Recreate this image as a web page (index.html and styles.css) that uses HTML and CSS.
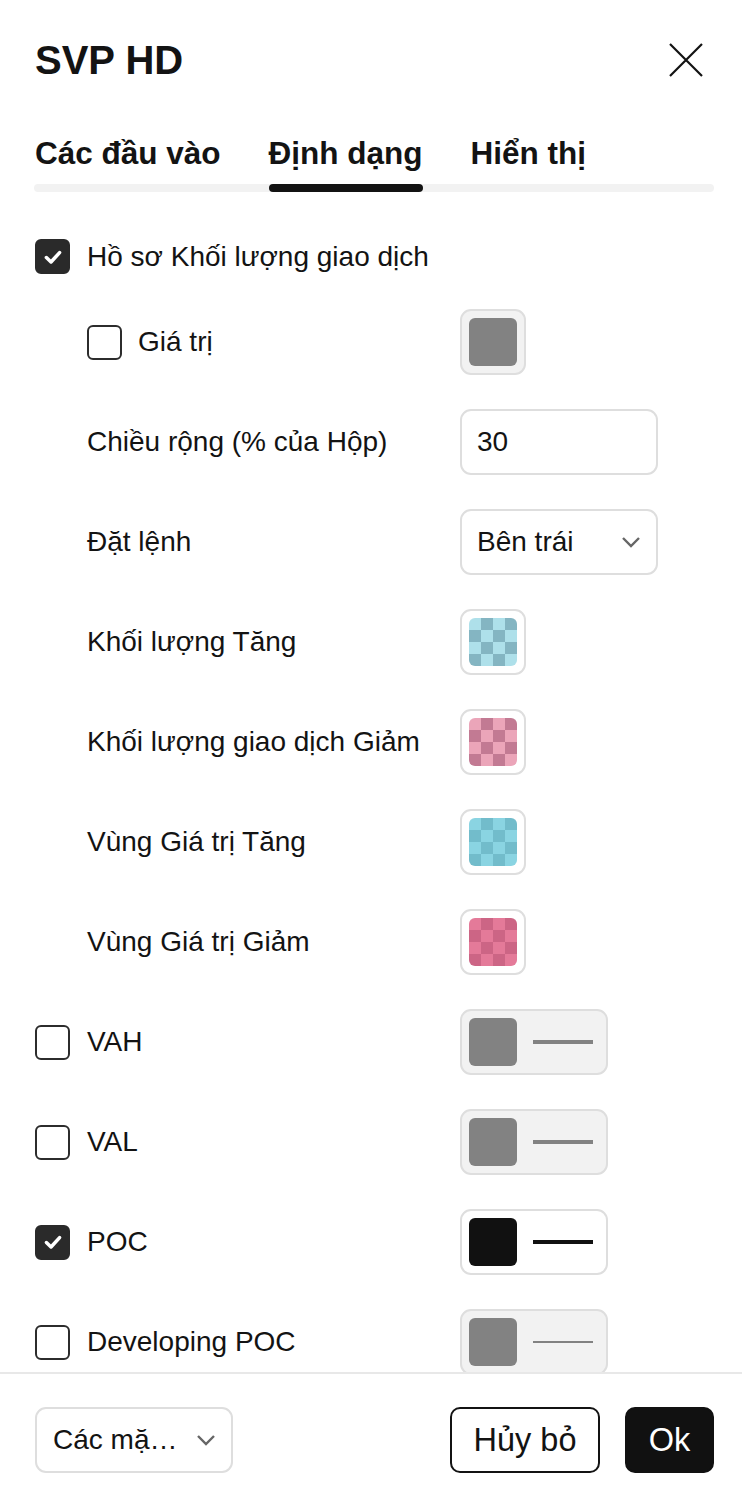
FILE: index.html
```html
<!DOCTYPE html>
<html lang="vi">
<head>
<meta charset="utf-8">
<title>SVP HD</title>
<link rel="stylesheet" href="styles.css">
</head>
<body>
<div class="dialog">
  <header class="header">
    <h1 class="title">SVP HD</h1>
    <button class="close" aria-label="Đóng">
      <svg width="34" height="34" viewBox="0 0 34 34"><path d="M1 1 L33 33 M33 1 L1 33" stroke="#131313" stroke-width="2.2" fill="none"/></svg>
    </button>
  </header>
  <nav class="tabs">
    <div class="tab-row">
      <span class="tab">Các đầu vào</span>
      <span class="tab active">Định dạng</span>
      <span class="tab">Hiển thị</span>
    </div>
    <div class="track"></div>
  </nav>
  <main class="content">
    <div class="row first">
      <label class="check-label"><span class="cb checked"><svg viewBox="0 0 20 20" width="22" height="22"><path d="M4 10.5 L8.2 14.5 L16 6" stroke="#fff" stroke-width="3.2" fill="none" stroke-linecap="round" stroke-linejoin="round"/></svg></span>Hồ sơ Khối lượng giao dịch</label>
    </div>
    <div class="row">
      <label class="check-label nested"><span class="cb"></span>Giá trị</label>
      <div class="swatch disabled"><span class="chip gray"></span></div>
    </div>
    <div class="row">
      <span class="label nested">Chiều rộng (% của Hộp)</span>
      <div class="field">30</div>
    </div>
    <div class="row">
      <span class="label nested">Đặt lệnh</span>
      <div class="field select">Bên trái<svg class="chev" width="20" height="12" viewBox="0 0 20 12"><path d="M2 2 L10 10 L18 2" stroke="#666" stroke-width="2.4" fill="none"/></svg></div>
    </div>
    <div class="row">
      <span class="label nested">Khối lượng Tăng</span>
      <div class="swatch"><span class="chip checker c1"></span></div>
    </div>
    <div class="row">
      <span class="label nested">Khối lượng giao dịch Giảm</span>
      <div class="swatch"><span class="chip checker c2"></span></div>
    </div>
    <div class="row">
      <span class="label nested">Vùng Giá trị Tăng</span>
      <div class="swatch"><span class="chip checker c3"></span></div>
    </div>
    <div class="row">
      <span class="label nested">Vùng Giá trị Giảm</span>
      <div class="swatch"><span class="chip checker c4"></span></div>
    </div>
    <div class="row">
      <label class="check-label"><span class="cb"></span>VAH</label>
      <div class="swatch wide disabled"><span class="chip gray"></span><span class="line gray-line"></span></div>
    </div>
    <div class="row">
      <label class="check-label"><span class="cb"></span>VAL</label>
      <div class="swatch wide disabled"><span class="chip gray"></span><span class="line gray-line"></span></div>
    </div>
    <div class="row">
      <label class="check-label"><span class="cb checked"><svg viewBox="0 0 20 20" width="22" height="22"><path d="M4 10.5 L8.2 14.5 L16 6" stroke="#fff" stroke-width="3.2" fill="none" stroke-linecap="round" stroke-linejoin="round"/></svg></span>POC</label>
      <div class="swatch wide"><span class="chip black"></span><span class="line black-line"></span></div>
    </div>
    <div class="row">
      <label class="check-label"><span class="cb"></span>Developing POC</label>
      <div class="swatch wide disabled"><span class="chip gray"></span><span class="line gray-line thin"></span></div>
    </div>
  </main>
  <footer class="footer">
    <div class="field select small">Các mặ…<svg class="chev" width="20" height="12" viewBox="0 0 20 12"><path d="M2 2 L10 10 L18 2" stroke="#666" stroke-width="2.4" fill="none"/></svg></div>
    <div class="actions">
      <button class="btn cancel">Hủy bỏ</button>
      <button class="btn ok">Ok</button>
    </div>
  </footer>
</div>
</body>
</html>
```

FILE: styles.css
```css
* { box-sizing: border-box; }
html, body { margin: 0; padding: 0; background: #fff; }
body {
  font-family: "Liberation Sans", Arial, sans-serif;
  color: #131313;
}
.dialog {
  width: 742px;
  height: 1496px;
  display: flex;
  flex-direction: column;
  overflow: hidden;
}
.header {
  height: 120px;
  flex: none;
  display: flex;
  align-items: center;
  justify-content: space-between;
  padding: 0 39px 0 35px;
}
.title {
  margin: 0;
  font-size: 40px;
  font-weight: 700;
  line-height: 48px;
}
.close {
  border: 0;
  background: none;
  padding: 0;
  width: 34px;
  height: 34px;
  display: flex;
}
.tabs {
  flex: none;
  padding: 0 28px 0 34px;
}
.tab-row {
  display: flex;
  gap: 48px;
  height: 64px;
  padding: 13px 0 11px 1px;
}
.tab {
  position: relative;
  font-size: 31.5px;
  font-weight: 700;
  line-height: 40px;
  white-space: nowrap;
}
.tab.active::after {
  content: "";
  position: absolute;
  left: 0;
  right: 0;
  bottom: -19px;
  height: 8px;
  border-radius: 4px;
  background: #131313;
}
.track {
  height: 8px;
  border-radius: 4px;
  background: #f2f2f2;
}
.content {
  flex: 1;
  overflow: hidden;
  display: flex;
  flex-direction: column;
  gap: 34px;
  padding-top: 46px;
}
.row {
  flex: none;
  display: grid;
  grid-template-columns: 425px auto;
  align-items: center;
  padding-left: 35px;
  min-height: 66px;
}
.row.first { min-height: 37px; }
.label, .check-label {
  font-size: 28px;
  line-height: 34px;
  white-space: nowrap;
}
.nested { padding-left: 52px; }
.check-label {
  display: flex;
  align-items: center;
  gap: 17px;
}
.check-label.nested { gap: 16px; }
.cb {
  width: 35px;
  height: 35px;
  flex: none;
  border: 2px solid #2c2c2c;
  border-radius: 6px;
  background: #fff;
  display: flex;
  align-items: center;
  justify-content: center;
}
.cb.checked {
  background: #2a2a2a;
  border-color: #2a2a2a;
}
.swatch {
  width: 66px;
  height: 66px;
  border: 2px solid #dedede;
  border-radius: 11px;
  background: #fff;
  display: flex;
  align-items: center;
  padding-left: 7px;
}
.swatch.disabled { background: #f2f2f2; }
.swatch.wide { width: 148px; }
.chip {
  width: 48px;
  height: 48px;
  border-radius: 6px;
  flex: none;
}
.chip.gray { background: #828282; }
.chip.black { background: #111; }
.checker { background-size: 24px 24px; }
.c1 {
  background-color: #aee0ea;
  background-image: conic-gradient(#84b5c2 0 25%, transparent 0 50%, #84b5c2 0 75%, transparent 0);
}
.c2 {
  background-color: #eba5b9;
  background-image: conic-gradient(#c27a93 0 25%, transparent 0 50%, #c27a93 0 75%, transparent 0);
}
.c3 {
  background-color: #8ad4e2;
  background-image: conic-gradient(#72bccb 0 25%, transparent 0 50%, #72bccb 0 75%, transparent 0);
}
.c4 {
  background-color: #e47a99;
  background-image: conic-gradient(#cc6585 0 25%, transparent 0 50%, #cc6585 0 75%, transparent 0);
}
.line {
  width: 60px;
  margin-left: 16px;
  height: 4px;
}
.gray-line { background: #828282; }
.black-line { background: #111; }
.line.thin { height: 2px; }
.field {
  width: 198px;
  height: 66px;
  border: 2px solid #dedede;
  border-radius: 11px;
  background: #fff;
  display: flex;
  align-items: center;
  padding: 0 15px;
  font-size: 28px;
}
.select { justify-content: space-between; padding-right: 15px; }
.chev { flex: none; }
.footer {
  flex: none;
  height: 124px;
  border-top: 2px solid #e8e8e8;
  display: flex;
  align-items: flex-start;
  justify-content: space-between;
  padding: 33px 28px 0 35px;
}
.field.small { width: 198px; padding: 0 15px 0 16px; }
.actions {
  display: flex;
  gap: 25px;
}
.btn {
  height: 66px;
  border-radius: 10px;
  font-family: "Liberation Sans", Arial, sans-serif;
  font-size: 32.5px;
  padding: 0;
  color: #131313;
}
.cancel {
  width: 150px;
  background: #fff;
  border: 2px solid #131313;
}
.ok {
  width: 89px;
  background: #111;
  color: #fff;
  border: 2px solid #111;
}
```
